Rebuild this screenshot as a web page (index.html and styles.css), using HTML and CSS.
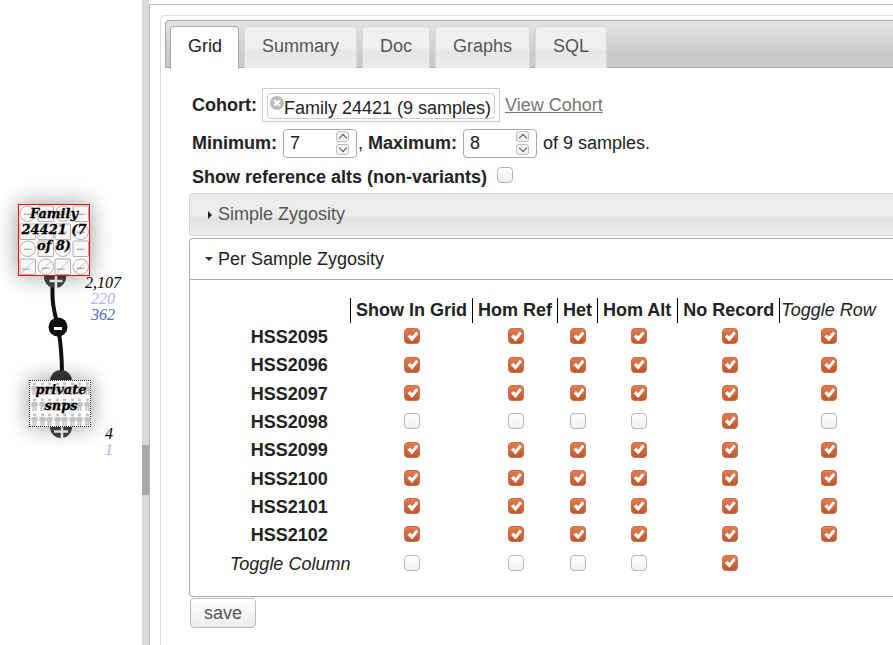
FILE: index.html
```html
<!DOCTYPE html>
<html lang="en">
<head>
    <meta charset="UTF-8">
    <meta name="viewport" content="width=device-width, initial-scale=1.0">
    <title>Grid</title>
    <link rel="stylesheet" href="styles.css">
</head>
<body>
    <svg class="defs" width="0" height="0">
        <defs>
            <symbol id="circle" viewBox="0 0 18 18">
                <circle cx="9" cy="9" r="8" fill="#f8f8f8" stroke="#aaa" stroke-width="1"/>
                <path d="M5 9.500h8" stroke="#444" stroke-width=".8" stroke-dasharray="1 .5"/>
            </symbol>
            <symbol id="square" viewBox="0 0 18 18">
                <rect x="1" y="1" width="16" height="16" rx="1" fill="#f8f8f8" stroke="#aaa"/>
                <path d="M5 9.500h8" stroke="#444" stroke-width=".8" stroke-dasharray="1 .5"/>
            </symbol>
            <symbol id="circle-off" viewBox="0 0 18 18">
                <circle cx="9" cy="9" r="8" fill="#f8f8f8" stroke="#aaa"/>
                <path d="M3 15L15 3" stroke="#bbb"/>
                <path d="M5 10.500h8" stroke="#444" stroke-width=".8" stroke-dasharray="1 .5"/>
            </symbol>
            <symbol id="square-off" viewBox="0 0 18 18">
                <rect x="1" y="1" width="16" height="16" rx="1" fill="#f8f8f8" stroke="#aaa"/>
                <path d="M2 16L16 2" stroke="#bbb"/>
                <path d="M3 11.500h8" stroke="#444" stroke-width=".8" stroke-dasharray="1 .5"/>
            </symbol>
            <symbol id="person" viewBox="0 0 8 16">
                <circle cx="4" cy="2.200" r="2" fill="#c2c2c2"/>
                <path d="M1 5h6l1 1v4H6.500v6H4.400v-5H3.600v5H1.500v-6H0V6z" fill="#c2c2c2"/>
            </symbol>
        </defs>
    </svg>

    <aside class="tree">
        <svg class="edges" width="142" height="645">
            <path d="M52.500 285C52 305 54 310 58 327C60 338 62 350 62 375" fill="none" stroke="#111" stroke-width="4"/>
            <circle cx="55" cy="277" r="11" fill="#444"/>
            <path d="M49.500 281h13M56 276v12" stroke="#fff" stroke-width="2.500"/>
            <circle cx="58" cy="327" r="9.500" fill="#0c0c0c"/>
            <path d="M54 328.500h8" stroke="#fff" stroke-width="3"/>
            <circle cx="61" cy="381" r="11" fill="#3a3a3a"/>
            <circle cx="61" cy="427" r="11" fill="#444"/>
            <path d="M54 431.500h14M62 427v11" stroke="#fff" stroke-width="2.500"/>
        </svg>

        <div class="node node-family">
            <div class="thumbs">
                <svg><use href="#circle"/></svg><svg><use href="#square"/></svg><svg><use href="#circle"/></svg><svg><use href="#square"/></svg>
                <svg><use href="#square"/></svg><svg><use href="#square"/></svg><svg><use href="#square"/></svg><svg><use href="#circle"/></svg>
                <svg><use href="#circle"/></svg><svg><use href="#square"/></svg><svg><use href="#circle"/></svg><svg><use href="#square"/></svg>
                <svg><use href="#square-off"/></svg><svg><use href="#circle-off"/></svg><svg><use href="#square-off"/></svg><svg><use href="#circle-off"/></svg>
            </div>
            <div class="node-label">Family 24421 (7 of 8)</div>
        </div>

        <div class="node node-private">
            <div class="people">
                <svg><use href="#person"/></svg><svg><use href="#person"/></svg><svg><use href="#person"/></svg><svg><use href="#person"/></svg><svg><use href="#person"/></svg><svg><use href="#person"/></svg><svg><use href="#person"/></svg><svg><use href="#person"/></svg>
                <svg><use href="#person"/></svg><svg><use href="#person"/></svg><svg><use href="#person"/></svg><svg><use href="#person"/></svg><svg><use href="#person"/></svg><svg><use href="#person"/></svg><svg><use href="#person"/></svg><svg><use href="#person"/></svg>
                <svg><use href="#person"/></svg><svg><use href="#person"/></svg><svg><use href="#person"/></svg><svg><use href="#person"/></svg><svg><use href="#person"/></svg><svg><use href="#person"/></svg><svg><use href="#person"/></svg><svg><use href="#person"/></svg>
            </div>
            <div class="node-label">private snps</div>
        </div>

        <div class="counts counts-family">
            <div>2,107</div>
            <div class="count-light">220</div>
            <div class="count-blue">362</div>
        </div>
        <div class="counts counts-private">
            <div>4</div>
            <div class="count-light">1</div>
        </div>
    </aside>

    <div class="splitter"><div class="splitter-handle"></div></div>

    <main class="pane">
        <div class="panel">
            <nav class="tabs">
                <a class="tab active">Grid</a>
                <a class="tab">Summary</a>
                <a class="tab">Doc</a>
                <a class="tab">Graphs</a>
                <a class="tab">SQL</a>
            </nav>

            <div class="form-row row-cohort">
                <label class="label">Cohort:</label>
                <div class="token-box">
                    <div class="token"><span class="token-x"></span>Family 24421 (9 samples)</div>
                </div>
                <a class="view-link">View Cohort</a>
            </div>

            <div class="form-row row-range">
                <label class="label">Minimum:</label>
                <div class="spinner"><span>7</span><div class="spin-btns"><i class="spin-up"></i><i class="spin-down"></i></div></div>
                <span class="after-spin">, <b>Maximum:</b></span>
                <div class="spinner"><span>8</span><div class="spin-btns"><i class="spin-up"></i><i class="spin-down"></i></div></div>
                <span>of 9 samples.</span>
            </div>

            <div class="form-row row-alts">
                <label class="label">Show reference alts (non-variants)</label>
                <input class="check" type="checkbox">
            </div>

            <div class="acc-head">
                <span class="arrow-right"></span>Simple Zygosity
            </div>

            <section class="acc-open">
                <div class="acc-title"><span class="arrow-down"></span>Per Sample Zygosity</div>
                <table class="zyg">
                    <thead>
                        <tr>
                            <th class="name-col"></th>
                            <th>Show In Grid</th>
                            <th>Hom Ref</th>
                            <th>Het</th>
                            <th class="hom-alt">Hom Alt</th>
                            <th>No Record</th>
                            <th class="toggle-head">Toggle Row</th>
                        </tr>
                    </thead>
                    <tbody>
                        <tr><td class="sample">HSS2095</td><td><input class="check" type="checkbox" checked></td><td><input class="check" type="checkbox" checked></td><td><input class="check" type="checkbox" checked></td><td><input class="check" type="checkbox" checked></td><td><input class="check" type="checkbox" checked></td><td><input class="check" type="checkbox" checked></td></tr>
                        <tr><td class="sample">HSS2096</td><td><input class="check" type="checkbox" checked></td><td><input class="check" type="checkbox" checked></td><td><input class="check" type="checkbox" checked></td><td><input class="check" type="checkbox" checked></td><td><input class="check" type="checkbox" checked></td><td><input class="check" type="checkbox" checked></td></tr>
                        <tr><td class="sample">HSS2097</td><td><input class="check" type="checkbox" checked></td><td><input class="check" type="checkbox" checked></td><td><input class="check" type="checkbox" checked></td><td><input class="check" type="checkbox" checked></td><td><input class="check" type="checkbox" checked></td><td><input class="check" type="checkbox" checked></td></tr>
                        <tr><td class="sample">HSS2098</td><td><input class="check" type="checkbox"></td><td><input class="check" type="checkbox"></td><td><input class="check" type="checkbox"></td><td><input class="check" type="checkbox"></td><td><input class="check" type="checkbox" checked></td><td><input class="check" type="checkbox"></td></tr>
                        <tr><td class="sample">HSS2099</td><td><input class="check" type="checkbox" checked></td><td><input class="check" type="checkbox" checked></td><td><input class="check" type="checkbox" checked></td><td><input class="check" type="checkbox" checked></td><td><input class="check" type="checkbox" checked></td><td><input class="check" type="checkbox" checked></td></tr>
                        <tr><td class="sample">HSS2100</td><td><input class="check" type="checkbox" checked></td><td><input class="check" type="checkbox" checked></td><td><input class="check" type="checkbox" checked></td><td><input class="check" type="checkbox" checked></td><td><input class="check" type="checkbox" checked></td><td><input class="check" type="checkbox" checked></td></tr>
                        <tr><td class="sample">HSS2101</td><td><input class="check" type="checkbox" checked></td><td><input class="check" type="checkbox" checked></td><td><input class="check" type="checkbox" checked></td><td><input class="check" type="checkbox" checked></td><td><input class="check" type="checkbox" checked></td><td><input class="check" type="checkbox" checked></td></tr>
                        <tr><td class="sample">HSS2102</td><td><input class="check" type="checkbox" checked></td><td><input class="check" type="checkbox" checked></td><td><input class="check" type="checkbox" checked></td><td><input class="check" type="checkbox" checked></td><td><input class="check" type="checkbox" checked></td><td><input class="check" type="checkbox" checked></td></tr>
                        <tr><td class="toggle-col">Toggle Column</td><td><input class="check" type="checkbox"></td><td><input class="check" type="checkbox"></td><td><input class="check" type="checkbox"></td><td><input class="check" type="checkbox"></td><td><input class="check" type="checkbox" checked></td><td></td></tr>
                    </tbody>
                </table>
            </section>

            <button class="save">save</button>
        </div>
    </main>
</body>
</html>
```

FILE: styles.css
```css
* {
    box-sizing: border-box;
}
html, body {
    height: 100%;
}
body {
    margin: 0;
    display: flex;
    overflow: hidden;
    background-color: #fff;
    color: #222;
    font-family: "Liberation Sans", Arial, sans-serif;
    font-size: 18px;
}
.defs {
    position: absolute;
}

/* left tree */
.tree {
    position: relative;
    flex: 0 0 142px;
    height: 645px;
    overflow: hidden;
}
.edges {
    position: absolute;
    top: 0;
    left: 0;
}
.node {
    position: absolute;
    background-color: #fff;
    box-shadow: 0 0 22px rgba(0, 0, 0, 0.4);
}
.node-family {
    top: 204px;
    left: 18px;
    width: 72px;
    height: 72px;
    border: 1px solid #f00;
}
.node-private {
    top: 380px;
    left: 29px;
    width: 62px;
    height: 47px;
    border: 1px dotted #222;
}
.node-private .node-label {
    padding-left: 2px;
}
.thumbs {
    display: grid;
    grid-template-columns: repeat(4, 17.500px);
    grid-auto-rows: 17.500px;
}
.thumbs svg {
    width: 17.500px;
    height: 17.500px;
}
.people {
    display: grid;
    grid-template-columns: repeat(8, 7.500px);
    grid-auto-rows: 15.500px;
    padding: 1px 0 0 1px;
}
.people svg {
    width: 7px;
    height: 13px;
}
.node-label {
    position: absolute;
    top: 1px;
    left: 0;
    right: 0;
    text-align: center;
    color: #000;
    font-family: "DejaVu Serif", serif;
    font-size: 13px;
    font-weight: bold;
    font-style: italic;
    line-height: 16px;
    -webkit-text-stroke: 0.3px #000;
    text-shadow: 0 0 2px #fff;
}
.counts {
    position: absolute;
    color: #000;
    font-family: "Liberation Serif", serif;
    font-size: 16px;
    font-style: italic;
    line-height: 16px;
    text-align: right;
}
.counts-family {
    top: 275px;
    left: 85px;
    width: 36px;
    text-align: center;
}
.counts-private {
    top: 426px;
    left: 105px;
    width: 8px;
}
.count-light {
    color: #b3aeff;
}
.count-blue {
    color: #4a70bd;
}

/* splitter */
.splitter {
    flex: 0 0 7px;
    height: 645px;
    padding-top: 445px;
    background-color: #d9d9d9;
}
.splitter-handle {
    height: 50px;
    background-color: #aaa;
}

/* right pane */
.pane {
    flex: 1;
    min-width: 0;
    margin-top: 4px;
    padding: 10px 0 0 10px;
    border-top: 1px solid #b5b5b5;
    border-left: 1px solid #b5b5b5;
    overflow: hidden;
}
.panel {
    width: 800px;
    height: 640px;
    padding: 4px;
    border: 1px solid #ddd;
    border-radius: 4px 0 0 0;
}
.tabs {
    display: flex;
    gap: 5px;
    height: 48px;
    padding: 5px 0 0 4px;
    border: 1px solid #aaa;
    border-right: 0;
    border-radius: 4px 0 0 0;
    background: linear-gradient(#e4e4e4, #cacaca 70%);
}
.tab {
    height: 42px;
    padding: 0 17px;
    border: 1px solid #d8d8d8;
    border-bottom: 0;
    border-radius: 4px 4px 0 0;
    background: linear-gradient(#f0f0f0 50%, #e6e6e6 60%, #ededed);
    color: #555;
    line-height: 38px;
}
.tab.active {
    height: 43px;
    padding-right: 16px;
    border-color: #aaa;
    background: #fff;
    color: #222;
}
.form-row {
    display: flex;
    align-items: center;
    padding-left: 27px;
}
.label, .after-spin b {
    font-weight: bold;
}
.row-cohort {
    margin-top: 20px;
    height: 34px;
}
.token-box {
    width: 238px;
    height: 34px;
    margin: 0 5px 0 5px;
    padding: 4px;
    border: 1px solid #ccc;
}
.token {
    display: flex;
    align-items: center;
    height: 26px;
    padding: 4px 0 0 2px;
    border: 1px solid #ccc;
    border-radius: 4px;
    white-space: nowrap;
}
.token-x {
    position: relative;
    flex: 0 0 14px;
    height: 14px;
    margin: -10px 0 0 0;
    border-radius: 50%;
    background-color: #bbb;
}
.token-x::before, .token-x::after {
    content: "";
    position: absolute;
    top: 6px;
    left: 3px;
    width: 8px;
    height: 2px;
    background-color: #fff;
    transform: rotate(45deg);
}
.token-x::after {
    transform: rotate(-45deg);
}
.view-link {
    color: #777;
    text-decoration: underline;
}
.row-range {
    margin-top: 6px;
    height: 29px;
    padding-top: 1px;
}
.spinner {
    display: flex;
    justify-content: space-between;
    align-items: center;
    width: 74px;
    height: 29px;
    margin: 0 0 0 6px;
    padding: 0 7px 0 6px;
    border: 1px solid #aaa;
    border-radius: 4px;
    background-color: #fff;
}
.after-spin {
    margin-left: 1px;
}
.after-spin + .spinner {
    margin-right: 6px;
}
.spin-btns {
    display: flex;
    flex-direction: column;
    gap: 2px;
}
.spin-btns i {
    position: relative;
    display: block;
    width: 13px;
    height: 11px;
    border: 1px solid #bbb;
    border-radius: 3px;
    background-color: #f2f2f2;
}
.spin-btns i::after {
    content: "";
    position: absolute;
    top: 3px;
    left: 3px;
    width: 5px;
    height: 5px;
    border-top: 1px solid #555;
    border-left: 1px solid #555;
    transform: rotate(45deg);
}
.spin-btns .spin-down::after {
    top: 0;
    transform: rotate(225deg);
}
.row-alts {
    gap: 10px;
    margin-top: 5px;
    height: 30px;
}
.row-alts .check {
    margin-bottom: 5px;
}
.check {
    position: relative;
    display: inline-block;
    width: 16px;
    height: 16px;
    margin: 0;
    border: 1px solid #b5b5b5;
    border-radius: 4px;
    background: linear-gradient(#fff, #f0f0f0);
    vertical-align: middle;
    appearance: none;
}
.check:checked {
    border-color: #c8704c;
    background: linear-gradient(#e47c50, #bd5730);
}
.check:checked::after {
    content: "";
    position: absolute;
    top: 2px;
    left: 2px;
    width: 11px;
    height: 10px;
    background-color: #fff;
    clip-path: polygon(0 52%, 25% 30%, 42% 52%, 80% 0, 100% 20%, 42% 100%);
}
.acc-head {
    display: flex;
    align-items: center;
    height: 43px;
    margin: 1px 0 2px 24px;
    padding-left: 18px;
    border: 1px solid #d4d4d4;
    border-right: 0;
    border-radius: 4px 0 0 4px;
    background: linear-gradient(#ededed 50%, #e2e2e2 62%, #f0f0f0);
    color: #555;
}
.arrow-right {
    width: 0;
    height: 0;
    margin-right: 6px;
    border-top: 4px solid transparent;
    border-bottom: 4px solid transparent;
    border-left: 4px solid #222;
}
.arrow-down {
    width: 0;
    height: 0;
    margin-right: 5px;
    border-left: 4px solid transparent;
    border-right: 4px solid transparent;
    border-top: 4px solid #333;
}
.acc-open {
    height: 359px;
    margin-left: 24px;
    border: 1px solid #aaa;
    border-right: 0;
    border-radius: 4px 0 0 4px;
}
.acc-title {
    display: flex;
    align-items: center;
    height: 41px;
    padding-left: 15px;
    border-bottom: 1px solid #aaa;
}
.zyg {
    margin: 18px 0 0 40px;
    border-collapse: collapse;
}
.zyg th {
    height: 25px;
    padding: 0 5px;
    border-left: 1px solid #000;
    font-weight: bold;
    white-space: nowrap;
}
.zyg th.name-col {
    width: 120px;
    padding: 0;
    border-left: 0;
}
.zyg th.hom-alt {
    padding-right: 6px;
}
.zyg th.toggle-head {
    padding: 0 1px;
    font-weight: normal;
    font-style: italic;
}
.zyg td {
    height: 28.300px;
    padding: 0;
    text-align: center;
}
.zyg .check {
    margin: 0 0 3px 2px;
}
.zyg td.sample {
    padding: 1px 2px 0 0;
    font-weight: bold;
}
.zyg td.toggle-col {
    padding: 1px 0 0 0;
    font-style: italic;
    white-space: nowrap;
}
.save {
    display: block;
    width: 66px;
    height: 30px;
    margin: 1px 0 0 25px;
    padding: 0;
    border: 1px solid #bbb;
    border-radius: 4px;
    background: linear-gradient(#fff, #ececec);
    color: #555;
    font-family: inherit;
    font-size: 18px;
}
```
